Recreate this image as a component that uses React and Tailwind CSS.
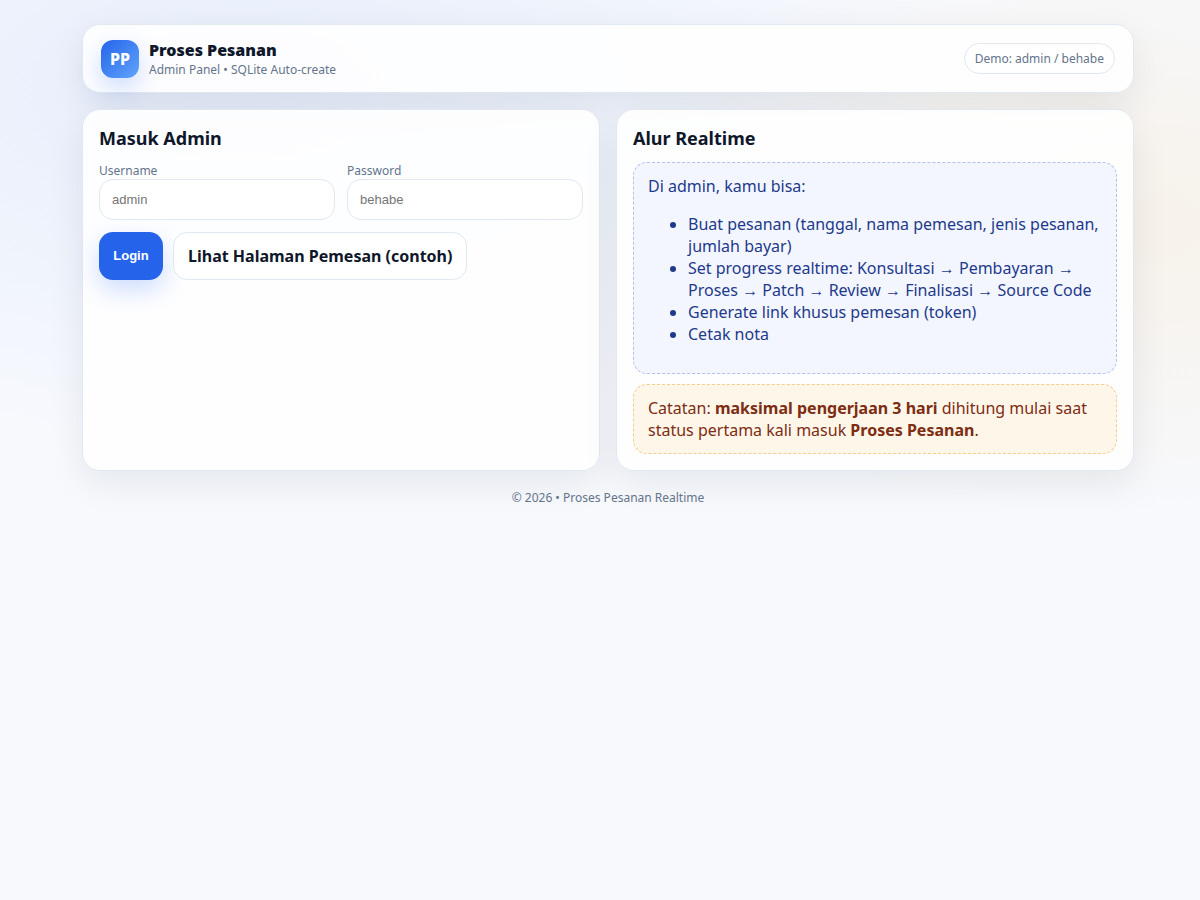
import React from "react";

const abilities = [
  "Buat pesanan (tanggal, nama pemesan, jenis pesanan, jumlah bayar)",
  "Set progress realtime: Konsultasi → Pembayaran → Proses → Patch → Review → Finalisasi → Source Code",
  "Generate link khusus pemesan (token)",
  "Cetak nota",
];

const panel =
  "rounded-[18px] border border-[#e2e8f0] bg-white/90 shadow-[0_12px_36px_rgba(15,23,42,0.08)]";

// --- labelled text input ---
const Field = ({ id, label, type, placeholder }) => (
  <div>
    <label htmlFor={id} className="block text-xs leading-[17px] text-[#64748b]">
      {label}
    </label>
    <input
      id={id}
      name={id}
      type={type}
      placeholder={placeholder}
      className="block h-[41px] w-full rounded-[14px] border border-[#e2e8f0] bg-white px-3 font-['Liberation_Sans',sans-serif] text-[13px] text-[#0f172a] placeholder:text-[#757575]"
    />
  </div>
);

const Header = () => (
  <header
    className={`flex flex-wrap items-center justify-between gap-3 px-[18px] py-3.5 ${panel}`}
  >
    <div className="flex items-center gap-2.5">
      <div className="flex size-[38px] items-center justify-center rounded-xl bg-[linear-gradient(135deg,#2563eb,#60a5fa)] font-extrabold text-white shadow-[0_10px_24px_rgba(37,99,235,0.22)]">
        PP
      </div>
      <div>
        <div className="font-black leading-[22px]">Proses Pesanan</div>
        <div className="text-xs leading-[17px] text-[#64748b]">
          Admin Panel • SQLite Auto-create
        </div>
      </div>
    </div>
    <div className="rounded-full border border-[#e2e8f0] bg-white px-2.5 py-1.5 text-xs leading-[17px] text-[#64748b]">
      Demo: admin / behabe
    </div>
  </header>
);

const LoginCard = () => (
  <section className={`p-4 ${panel}`}>
    <h2 className="mb-3 text-lg font-bold leading-6">Masuk Admin</h2>
    <form onSubmit={(e) => e.preventDefault()}>
      <div className="grid grid-cols-1 gap-3 sm:grid-cols-2">
        <Field id="username" label="Username" type="text" placeholder="admin" />
        <Field
          id="password"
          label="Password"
          type="password"
          placeholder="behabe"
        />
      </div>
      <div className="mt-3 flex flex-wrap gap-2.5">
        <button
          type="submit"
          className="w-16 cursor-pointer rounded-[14px] bg-[#2563eb] font-['Liberation_Sans',sans-serif] text-[13px] font-bold text-white shadow-[0_10px_24px_rgba(37,99,235,0.22)]"
        >
          Login
        </button>
        <a
          href="#contoh"
          className="rounded-[14px] border border-[#e2e8f0] bg-white px-3.5 py-3 font-bold leading-[22px]"
        >
          Lihat Halaman Pemesan (contoh)
        </a>
      </div>
    </form>
  </section>
);

const FlowCard = () => (
  <section className={`p-4 ${panel}`}>
    <h2 className="mb-3 text-lg font-bold leading-6">Alur Realtime</h2>
    <div className="rounded-[14px] border border-dashed border-[#b4c0ee] bg-[#f3f6ff] px-3.5 py-3 leading-[22px] text-[#1e3a8a]">
      Di admin, kamu bisa:
      <ul className="my-4 list-disc pl-10">
        {abilities.map((item) => (
          <li key={item}>{item}</li>
        ))}
      </ul>
    </div>
    <div className="mt-2.5 rounded-[14px] border border-dashed border-[#f3cf8d] bg-[#fff6ea] px-3.5 py-3 leading-[22px] text-[#7c2d12]">
      Catatan: <b>maksimal pengerjaan 3 hari</b> dihitung mulai saat status
      pertama kali masuk <b>Proses Pesanan</b>.
    </div>
  </section>
);

export default function App() {
  return (
    <div className="min-h-screen bg-[#f7f9fd] bg-[radial-gradient(1200px_600px_at_20%_10%,rgba(37,99,235,0.08),transparent_60%),radial-gradient(900px_500px_at_95%_25%,rgba(245,158,11,0.08),transparent_60%)] pl-4 font-['Noto_Sans',sans-serif] text-[#0f172a]">
      <div className="mx-auto max-w-[1100px] p-6">
        <Header />
        <main className="mt-4 grid grid-cols-1 gap-4 md:grid-cols-2">
          <LoginCard />
          <FlowCard />
        </main>
        <footer className="mt-[18px] text-center text-xs leading-[17px] text-[#64748b]">
          © 2026 • Proses Pesanan Realtime
        </footer>
      </div>
    </div>
  );
}
